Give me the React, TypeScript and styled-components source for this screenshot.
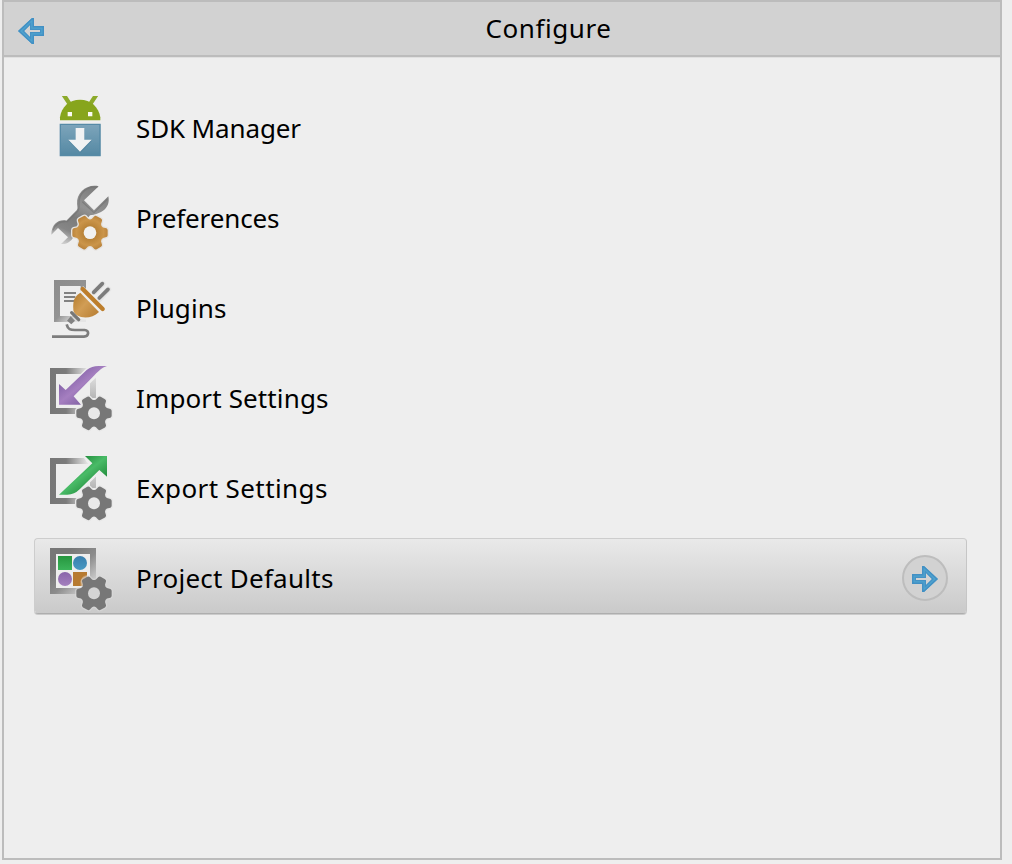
import React from "react";
import styled, { createGlobalStyle, css } from "styled-components";

const GlobalStyle = createGlobalStyle`
  * { box-sizing: border-box; }
  body { margin: 0; background: #eeeeee; overflow: hidden; }
`;

const Panel = styled.main`
  width: 1000px;
  height: 860px;
  margin-left: 2px;
  display: flex;
  flex-direction: column;
  border: 2px solid #bcbcbc;
  background: #eeeeee;
  color: #000;
  font-family: "Noto Sans", "Open Sans", sans-serif;
  font-size: 26px;
`;

const Header = styled.header`
  flex: none;
  height: 55px;
  display: grid;
  grid-template-columns: 92px 1fr;
  align-items: center;
  background: #d2d2d2;
  border-bottom: 2px solid #bcbcbc;
  box-shadow: 0 1px 0 #e0e0e0;
`;

const BackButton = styled.button`
  display: flex;
  width: 28px;
  height: 28px;
  margin: 4px 0 0 13px;
  padding: 0;
  border: 0;
  background: none;
`;

const Title = styled.h1<{ $spacing: number }>`
  margin: 0 0 1px 1px;
  font-size: 26px;
  line-height: 36px;
  font-weight: 400;
  text-align: center;
  letter-spacing: ${(p) => p.$spacing}px;
`;

const Menu = styled.nav`
  display: flex;
  flex-direction: column;
  gap: 14px;
  padding: 31px 33px 0 30px;
`;

const Row = styled.div<{ $active?: boolean }>`
  height: 76px;
  display: flex;
  align-items: center;
  padding: 0 18px 0 5px;
  border: 1px solid transparent;
  border-radius: 4px;
  ${(p) =>
    p.$active &&
    css`
      background: linear-gradient(#e9e9e9, #cacaca) padding-box;
      border-color: #cdcdcd #c6c6c6 #aeaeae #cdcdcd;
      box-shadow: 0 1px 0 #cbcbcb;
    `}
`;

const IconSvg = styled.svg`
  flex: none;
  width: 80px;
  height: 76px;
  overflow: visible;
`;

const Label = styled.span<{ $spacing: number }>`
  flex: 1;
  margin: 4px 0 0 16px;
  line-height: 36px;
  white-space: nowrap;
  letter-spacing: ${(p) => p.$spacing}px;
`;

const Chevron = styled.span`
  flex: none;
  width: 46px;
  height: 46px;
  margin-top: 4px;
  padding-top: 1px;
  display: flex;
  align-items: center;
  justify-content: center;
  border: 2px solid #bdbdbd;
  border-radius: 50%;
  background: #d2d2d2;
`;

const ArrowSvg = styled.svg<{ $back?: boolean }>`
  width: 28px;
  height: 28px;
  transform: ${(p) => (p.$back ? "scaleX(-1)" : "none")};
`;

const Arrow = ({ back }: { back?: boolean }) => {
  const id = back ? "arrowBack" : "arrowGo";
  return (
    <ArrowSvg $back={back} viewBox="0 0 28 28">
      <defs>
        <clipPath id={id}>
          <path clipRule="evenodd" d="M1 9H11V1H13L27 14L13 27H11V19H1ZM5 13V15H15V20L21 14L15 8V13Z" />
        </clipPath>
      </defs>
      <g clipPath={`url(#${id})`}>
        <rect width="28" height="28" fill="#4fa3ce" />
        <path d="M1 9H11V1H13L27 14L13 27H11V19H1Z" fill="none" stroke="#4290c4" strokeWidth="3" />
        <path d="M5 13H15V8L21 14L15 20V15H5Z" fill="none" stroke="#4592c5" strokeWidth="2.5" />
      </g>
    </ArrowSvg>
  );
};

/* Six-toothed cog centred on the origin. */
const cogPath = (() => {
  const parts: string[] = [];
  for (let i = 0; i < 6; i++) {
    const at = (deg: number, r: number) => {
      const a = ((i * 60 + deg) * Math.PI) / 180;
      return `${(Math.cos(a) * r).toFixed(2)} ${(Math.sin(a) * r).toFixed(2)}`;
    };
    parts.push(`${i ? "L" : "M"}${at(-22, 42)}`);
    parts.push(`L${at(-15, 51)}Q${at(-13, 54)} ${at(-8, 53.5)}`);
    parts.push(`L${at(8, 53.5)}Q${at(13, 54)} ${at(15, 51)}`);
    parts.push(`L${at(22, 42)}Q${at(30, 38)} ${at(38, 42)}`);
  }
  return parts.join("") + "Z";
})();

type CogProps = { x: number; y: number; fill: string; halo: string; hole: number; holeFill: string };
const Cog = ({ x, y, fill, halo, hole, holeFill }: CogProps) => (
  <g transform={`translate(${x} ${y})`}>
    <path d={cogPath} fill={halo} stroke={halo} strokeWidth="8" strokeLinejoin="round" />
    <path d={cogPath} fill={fill} />
    <circle r={hole} fill={holeFill} />
  </g>
);

const SdkIcon = () => (
  <IconSvg viewBox="0 6 240 228">
    <defs>
      <linearGradient id="sdkBox" x2="0" y2="1">
        <stop stopColor="#7da5bb" />
        <stop offset="1" stopColor="#5488a3" />
      </linearGradient>
      <filter id="sdkSoft" x="-10%" y="-10%" width="120%" height="120%">
        <feGaussianBlur stdDeviation="2.2" />
      </filter>
      <clipPath id="sdkClip">
        <rect x="40" y="30" width="160" height="190" />
      </clipPath>
    </defs>
    <g clipPath="url(#sdkClip)">
      <g filter="url(#sdkSoft)">
        <path d="M68 22L88 52M172 22L152 52" stroke="#8caa2b" strokeWidth="13" />
        <path d="M60 103V94C64 62 88 41 120 41S176 62 181 94V103Z" fill="#87a51f" />
        <path d="M83 78h13v13h-13zM144 78h13v13h-13z" fill="#fbfbf2" />
        <rect x="60" y="114" width="121" height="96" fill="url(#sdkBox)" />
        <path d="M61 115H180V209H61Z" fill="none" stroke="#568aa6" strokeWidth="4" />
        <path d="M108 129H133V164H156L121 200L85 164H108Z" fill="#3e7694" opacity=".55" />
        <path d="M107 126H133V161H155L120 197L85 161H107Z" fill="#f1f2f3" />
      </g>
    </g>
  </IconSvg>
);

const PreferencesIcon = () => (
  <IconSvg viewBox="0 6 240 228">
    <defs>
      <linearGradient id="wrench" gradientUnits="userSpaceOnUse" x1="150" y1="30" x2="75" y2="205">
        <stop stopColor="#7d7d7d" />
        <stop offset=".35" stopColor="#939393" />
        <stop offset=".55" stopColor="#7b7b7b" />
        <stop offset=".78" stopColor="#868686" />
        <stop offset="1" stopColor="#cfcfcf" />
      </linearGradient>
      <radialGradient id="prefCog" cx=".5" cy=".5" r=".55">
        <stop offset=".35" stopColor="#b98338" />
        <stop offset=".7" stopColor="#cb954a" />
        <stop offset="1" stopColor="#b57e38" />
      </radialGradient>
    </defs>
    <path
      d="M176 31C142 23 109 48 111 85C112 93 114 98 110 103L79 134C59 129 34 142 34 176L54 156L84 184L63 204C80 206 97 196 104 174L150 118C181 115 213 97 205 61L162 103L132 73Z"
      fill="url(#wrench)"
    />
    <path
      d="M172 34C143 29 115 51 117 83C118 94 118 99 113 106L82 137C61 134 45 145 39 163M127 77L162 110L202 70"
      fill="none"
      stroke="#727272"
      strokeWidth="4"
      opacity=".6"
    />
    <Cog x={150} y={170} fill="url(#prefCog)" halo="#e5e3e0" hole={19} holeFill="#f1f1f0" />
  </IconSvg>
);

const PluginsIcon = () => (
  <IconSvg viewBox="0 -6 240 228">
    <defs>
      <linearGradient id="plugPage" x1="0" y1="0" x2=".8" y2="1">
        <stop stopColor="#8c8c8c" />
        <stop offset=".6" stopColor="#939393" />
        <stop offset=".85" stopColor="#d3d3d3" />
        <stop offset="1" stopColor="#e5e5e5" />
      </linearGradient>
      <linearGradient id="plugBody" x1="0" y1=".2" x2="1" y2="1">
        <stop stopColor="#b98133" />
        <stop offset=".4" stopColor="#d19d55" />
        <stop offset="1" stopColor="#b67c31" />
      </linearGradient>
    </defs>
    <path fillRule="evenodd" fill="url(#plugPage)" d="M42 30H138V156H42ZM60 48V138H122V48Z" />
    <path d="M72 69H108M72 81H106M72 93H106" stroke="#828282" strokeWidth="6" />
    <path d="M163 66L188 41M179 87L205 58" stroke="#e4e4e4" strokeWidth="17" strokeLinecap="round" />
    <path d="M161 67L187 41M178 84L204 58" stroke="#7c7c7c" strokeWidth="11" strokeLinecap="round" />
    <path d="M123 60C110 77 99 88 100 116L97 128L112 145C133 151 161 150 179 130L199 118L129 48Z" fill="#eeeeee" />
    <path d="M121 68C103 80 98 91 100 120C103 144 150 153 177 126Z" fill="url(#plugBody)" />
    <path d="M128 57L188 117" stroke="#bd7e2c" strokeWidth="13" strokeLinecap="round" />
    <path d="M95 128L116 149" stroke="#777" strokeWidth="10" strokeLinecap="round" />
    <path d="M92 139L105 152L94 163L81 152Z" fill="#828282" />
    <path d="M80 163C84 179 91 180 105 180H134C149 181 147 199 132 200H36" fill="none" stroke="#7d7d7d" strokeWidth="8" />
  </IconSvg>
);

const TransferFrame = ({ id }: { id: string }) => (
  <>
    <defs>
      <linearGradient id={id} gradientUnits="userSpaceOnUse" x1="30" y1="90" x2="168" y2="90">
        <stop stopColor="#777" />
        <stop offset=".35" stopColor="#7b7b7b" />
        <stop offset=".8" stopColor="#e2e2e2" />
        <stop offset="1" stopColor="#e2e2e2" />
      </linearGradient>
      <linearGradient id={`${id}Side`} x2="0" y2="1">
        <stop stopColor="#e4e4e4" />
        <stop offset="1" stopColor="#b5b5b5" />
      </linearGradient>
    </defs>
    <path d="M30 30H150V48H48V150H110V168H30Z" fill={`url(#${id})`} />
    <path d="M150 48H168V120H150Z" fill={`url(#${id}Side)`} />
  </>
);

const ImportIcon = () => (
  <IconSvg viewBox="0 0 240 228">
    <TransferFrame id="importFrame" />
    <defs>
      <linearGradient id="importArrow" x2="1" y2="1">
        <stop offset=".2" stopColor="#805fa5" />
        <stop offset=".48" stopColor="#a57fc0" />
        <stop offset=".75" stopColor="#8060a3" />
      </linearGradient>
    </defs>
    <path d="M50 66L80 90L142 28L175 18H211L108 116L131 146H50Z" fill="#eeeeee" />
    <path d="M57 78L77 96L140 36Q155 24 176 24H201C184 30 178 37 164 51L101 115L123 140H57Z" fill="url(#importArrow)" />
    <Cog x={162} y={166} fill="#777777" halo="#e8e8e8" hole={18} holeFill="#e9e9e9" />
  </IconSvg>
);

const ExportIcon = () => (
  <IconSvg viewBox="0 0 240 228">
    <TransferFrame id="exportFrame" />
    <defs>
      <linearGradient id="exportArrow" x2="1" y2="1">
        <stop offset=".25" stopColor="#218b3b" />
        <stop offset=".5" stopColor="#49bb67" />
        <stop offset=".78" stopColor="#218b3b" />
      </linearGradient>
    </defs>
    <path d="M48 144L145 49L124 19H207V98L179 75L112 140Z" fill="#eeeeee" />
    <path d="M57 140L157 46L135 24H201V86L178 66L119 124Q103 140 82 140Z" fill="url(#exportArrow)" />
    <Cog x={162} y={166} fill="#777777" halo="#e8e8e8" hole={18} holeFill="#e9e9e9" />
  </IconSvg>
);

const ProjectIcon = () => (
  <IconSvg viewBox="42 24 240 228">
    <defs>
      <linearGradient id="projFrame" x2="1" y2="1">
        <stop offset=".2" stopColor="#777" />
        <stop offset=".55" stopColor="#8c8c8c" />
        <stop offset=".85" stopColor="#c5c5c5" />
      </linearGradient>
      <linearGradient id="projGreen" x2="0" y2="1">
        <stop stopColor="#26963f" />
        <stop offset="1" stopColor="#3cb45a" />
      </linearGradient>
      <linearGradient id="projBlue" x2="0" y2="1">
        <stop stopColor="#397fae" />
        <stop offset="1" stopColor="#4899c3" />
      </linearGradient>
      <linearGradient id="projPurple" x2="0" y2="1">
        <stop stopColor="#8965aa" />
        <stop offset="1" stopColor="#a480be" />
      </linearGradient>
    </defs>
    <rect x="81" y="63" width="120" height="120" fill="#eeeeee" stroke="url(#projFrame)" strokeWidth="18" />
    <rect x="96" y="78" width="42" height="42" fill="url(#projGreen)" />
    <circle cx="162" cy="99" r="21" fill="url(#projBlue)" />
    <circle cx="117" cy="147" r="21" fill="url(#projPurple)" />
    <rect x="141" y="126" width="42" height="42" fill="#b77b31" />
    <path d="M164 168Q160 138 183 135V168Z" fill="#c79a66" />
    <Cog x={204} y={190} fill="#777777" halo="rgba(222,222,222,.48)" hole={18} holeFill="#d5d5d5" />
  </IconSvg>
);

const items = [
  { label: "SDK Manager", Icon: SdkIcon, spacing: -0.13 },
  { label: "Preferences", Icon: PreferencesIcon, spacing: -0.12 },
  { label: "Plugins", Icon: PluginsIcon, spacing: 0.12 },
  { label: "Import Settings", Icon: ImportIcon, spacing: 0.13 },
  { label: "Export Settings", Icon: ExportIcon, spacing: 0.4 },
  { label: "Project Defaults", Icon: ProjectIcon, spacing: 0.26, active: true },
];

export default function App() {
  return (
    <>
      <GlobalStyle />
      <Panel>
        <Header>
          <BackButton aria-label="Back">
            <Arrow back />
          </BackButton>
          <Title $spacing={0.55}>Configure</Title>
        </Header>
        <Menu>
          {items.map(({ label, Icon, spacing, active }) => (
            <Row key={label} $active={active}>
              <Icon />
              <Label $spacing={spacing}>{label}</Label>
              {active && (
                <Chevron>
                  <Arrow />
                </Chevron>
              )}
            </Row>
          ))}
        </Menu>
      </Panel>
    </>
  );
}
